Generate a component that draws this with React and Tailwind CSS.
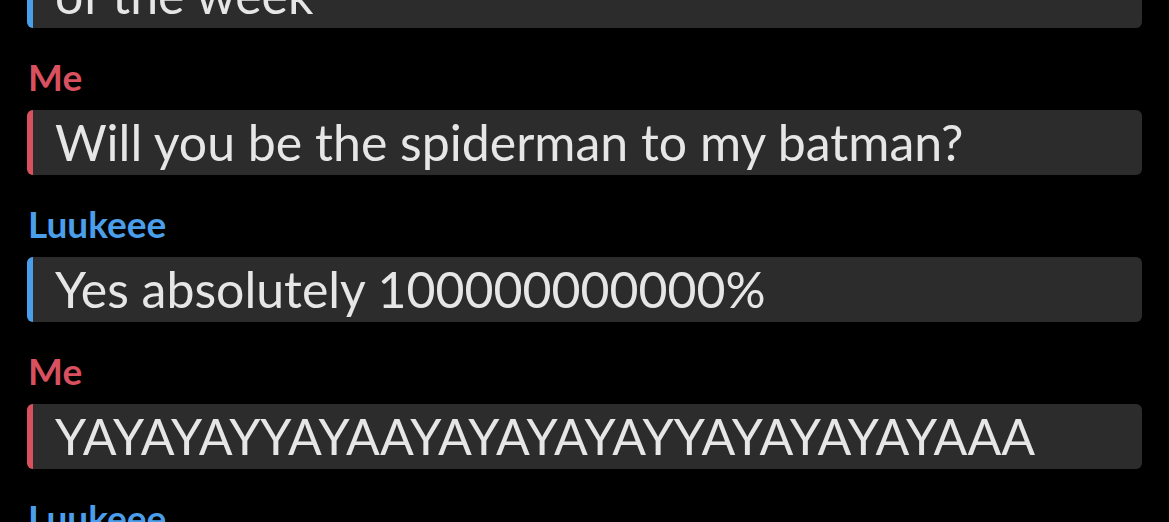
import React from "react";

const messages = [
  { from: "Luukeee", text: "of the week" },
  { from: "Me", text: "Will you be the spiderman to my batman?" },
  { from: "Luukeee", text: "Yes absolutely 100000000000%" },
  { from: "Me", text: "YAYAYAYYAYAAYAYAYAYAYYAYAYAYAYAAA" },
  { from: "Luukeee", text: "" },
];

function Bubble({ me, text }) {
  return (
    <div className="flex h-[65px] rounded-[6px] bg-[#2c2c2c] overflow-hidden">
      <div className={me ? "w-[6px] shrink-0 bg-[#d9505e]" : "w-[6px] shrink-0 bg-[#4b9fea]"} />
      <div className="flex items-center pl-[22px] pb-[1px] text-[50px] leading-none text-[#e6e6e6] whitespace-nowrap">
        {text}
      </div>
    </div>
  );
}

export default function App() {
  return (
    <div className="h-[522px] w-[1169px] overflow-hidden bg-black font-['Lato',sans-serif]">
      <div className="-mt-[37px] flex flex-col px-[27px]">
        {messages.map((m, i) => {
          const me = m.from === "Me";
          return (
            <div key={i} className="flex flex-col">
              {i > 0 && (
                <div
                  className={
                    (me ? "text-[#d9505e]" : "text-[#4b9fea]") +
                    " mt-[29px] mb-[14px] pl-[1px] text-[37px] font-bold leading-[39px]"
                  }
                >
                  {m.from}
                </div>
              )}
              <Bubble me={me} text={m.text} />
            </div>
          );
        })}
      </div>
    </div>
  );
}
